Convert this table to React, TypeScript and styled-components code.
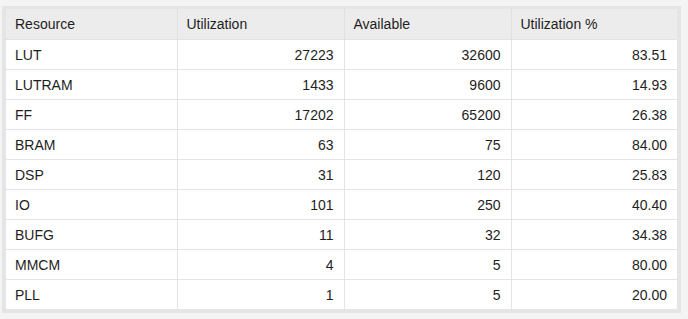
import React from 'react';
import styled, { createGlobalStyle } from 'styled-components';

const GlobalStyle = createGlobalStyle`
    html, body {
        margin: 0;
        padding: 0;
        background: #f4f4f4;
        font-family: "Liberation Sans", Arial, sans-serif;
    }
`;

const rows: [string, number, number, string][] = [
    ['LUT', 27223, 32600, '83.51'],
    ['LUTRAM', 1433, 9600, '14.93'],
    ['FF', 17202, 65200, '26.38'],
    ['BRAM', 63, 75, '84.00'],
    ['DSP', 31, 120, '25.83'],
    ['IO', 101, 250, '40.40'],
    ['BUFG', 11, 32, '34.38'],
    ['MMCM', 4, 5, '80.00'],
    ['PLL', 1, 5, '20.00'],
];

export default function App() {
    return (
        <>
            <GlobalStyle />
            <Page>
                <Panel>
                    <Table>
                        <colgroup>
                            <col style={{ width: 171 }} />
                            <col style={{ width: 167 }} />
                            <col style={{ width: 167 }} />
                            <col style={{ width: 166 }} />
                        </colgroup>
                        <thead>
                            <tr>
                                <Th>Resource</Th>
                                <Th>Utilization</Th>
                                <Th>Available</Th>
                                <Th>Utilization %</Th>
                            </tr>
                        </thead>
                        <tbody>
                            {rows.map(([name, used, avail, pct]) => (
                                <tr key={name}>
                                    <Td>{name}</Td>
                                    <Td $num>{used}</Td>
                                    <Td $num>{avail}</Td>
                                    <Td $num>{pct}</Td>
                                </tr>
                            ))}
                        </tbody>
                    </Table>
                </Panel>
            </Page>
        </>
    );
}

const Page = styled.div`
    padding: 6px 7px 7px 2px;
`;

const Panel = styled.div`
    background: #e5e5e5;
    padding: 3px 4px 4px 4px;
`;

const Table = styled.table`
    width: 671px;
    table-layout: fixed;
    border-collapse: collapse;
    background: #fff;
    font-size: 14px;
    color: #1e1e1e;
`;

const Th = styled.th`
    background: #ececec;
    height: 30px;
    padding: 0 9px;
    font-weight: normal;
    text-align: left;
    border-left: 1px solid #e0e0e0;
    border-bottom: 1px solid #e2e2e2;

    &:first-child {
        border-left: none;
    }
`;

const Td = styled.td<{ $num?: boolean }>`
    height: 29px;
    padding: 0 10px 0 9px;
    text-align: ${(p) => (p.$num ? 'right' : 'left')};
    border-left: 1px solid #e4e4e4;
    border-top: 1px solid #e4e4e4;

    &:first-child {
        border-left: none;
    }
`;
